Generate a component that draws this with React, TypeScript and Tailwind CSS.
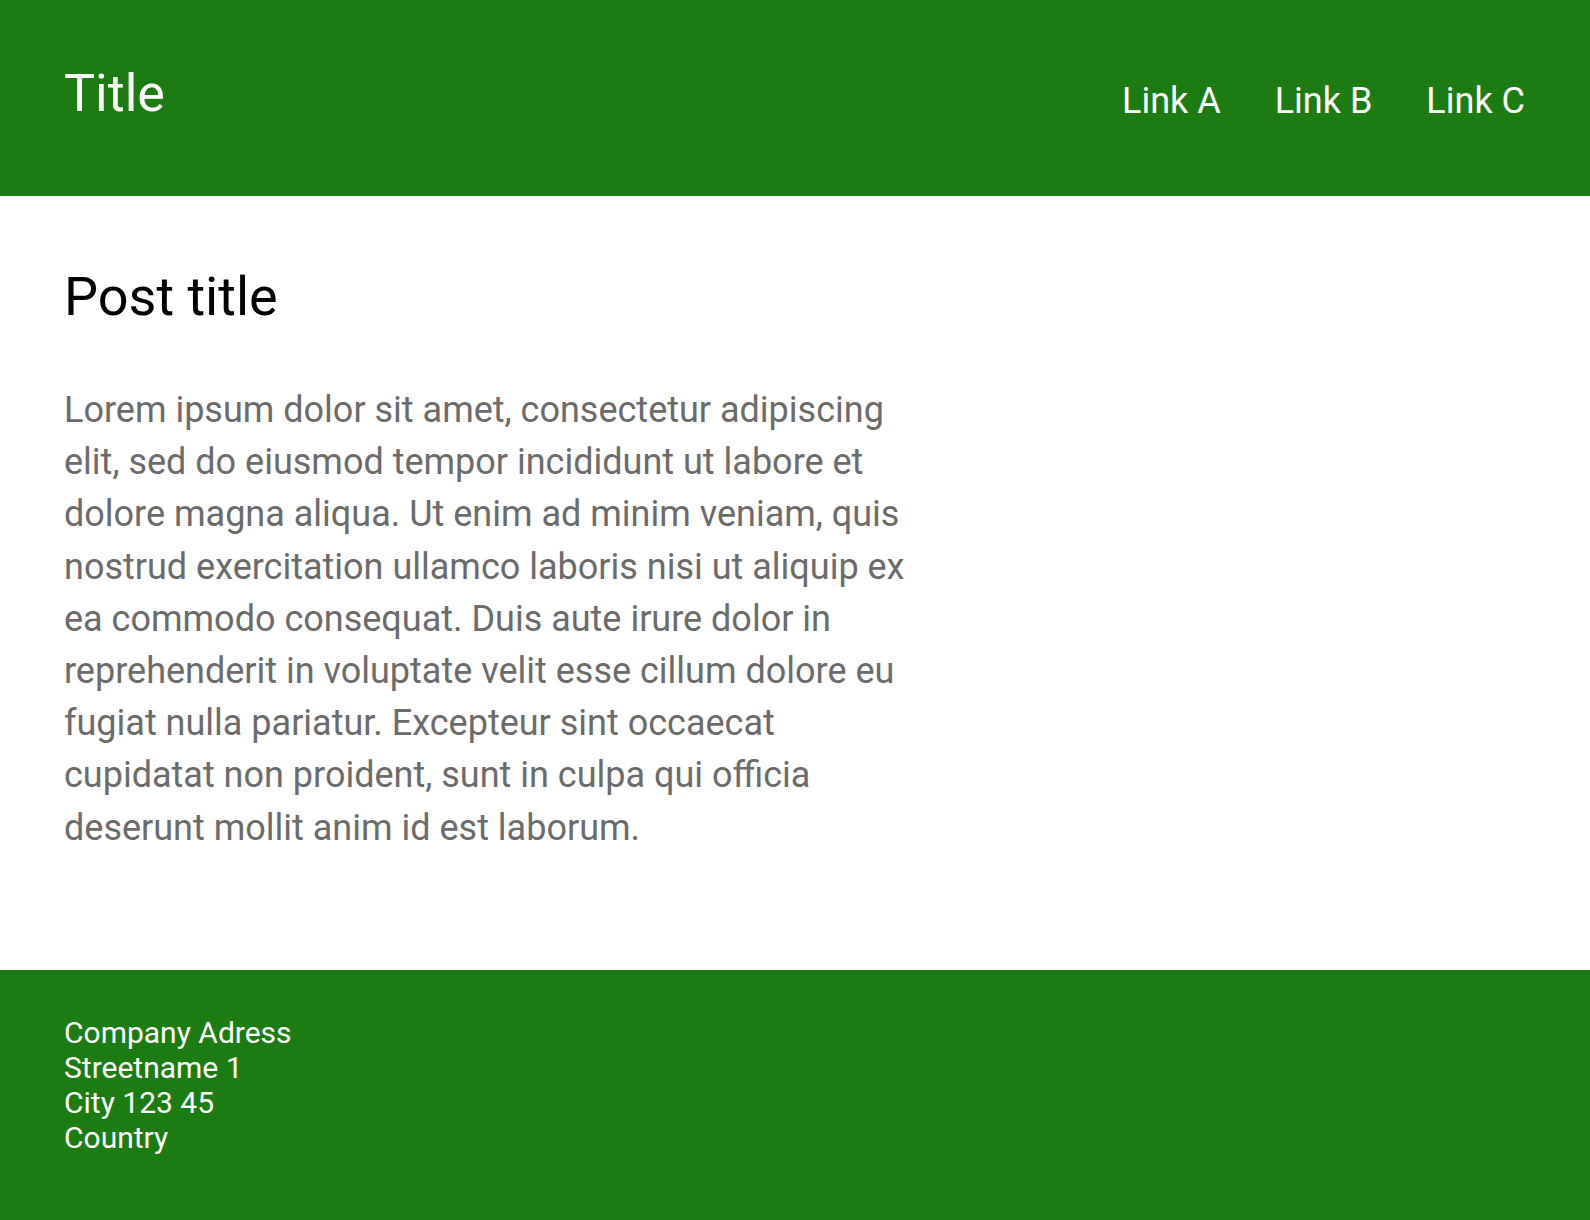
import React from 'react';

const App: React.FC = () => {
  return (
    <div className="flex flex-col min-h-screen bg-white font-['Roboto',sans-serif]">
      <header className="flex justify-between items-start h-[196px] bg-[#1d7b13] pl-16 pr-[65px]">
        <h1 className="text-white text-[52px] font-normal leading-[61px] pt-[63px] m-0">Title</h1>
        <nav className="flex items-center gap-[54px] pt-[80px]">
          <a href="#" className="text-white text-[36px] leading-[42px]">Link A</a>
          <a href="#" className="text-white text-[36px] leading-[42px]">Link B</a>
          <a href="#" className="text-white text-[36px] leading-[42px]">Link C</a>
        </nav>
      </header>
      <main className="flex-1 px-16 pt-[69px]">
        <h2 className="text-black text-[54px] font-normal leading-[63px] m-0">Post title</h2>
        <p className="text-[#6b6b6b] text-[36px] leading-[1.45] max-w-[860px] mt-[56px]">
          Lorem ipsum dolor sit amet, consectetur adipiscing elit, sed do eiusmod tempor incididunt ut labore et dolore magna aliqua. Ut enim ad minim veniam, quis nostrud exercitation ullamco laboris nisi ut aliquip ex ea commodo consequat. Duis aute irure dolor in reprehenderit in voluptate velit esse cillum dolore eu fugiat nulla pariatur. Excepteur sint occaecat cupidatat non proident, sunt in culpa qui officia deserunt mollit anim id est laborum.
        </p>
      </main>
      <footer className="h-[250px] bg-[#1d7b13] px-16 pt-[45px]">
        <div className="text-white text-[30px] leading-[35px]">
          <p>Company Adress</p>
          <p>Streetname 1</p>
          <p>City 123 45</p>
          <p>Country</p>
        </div>
      </footer>
    </div>
  );
};

export default App;
